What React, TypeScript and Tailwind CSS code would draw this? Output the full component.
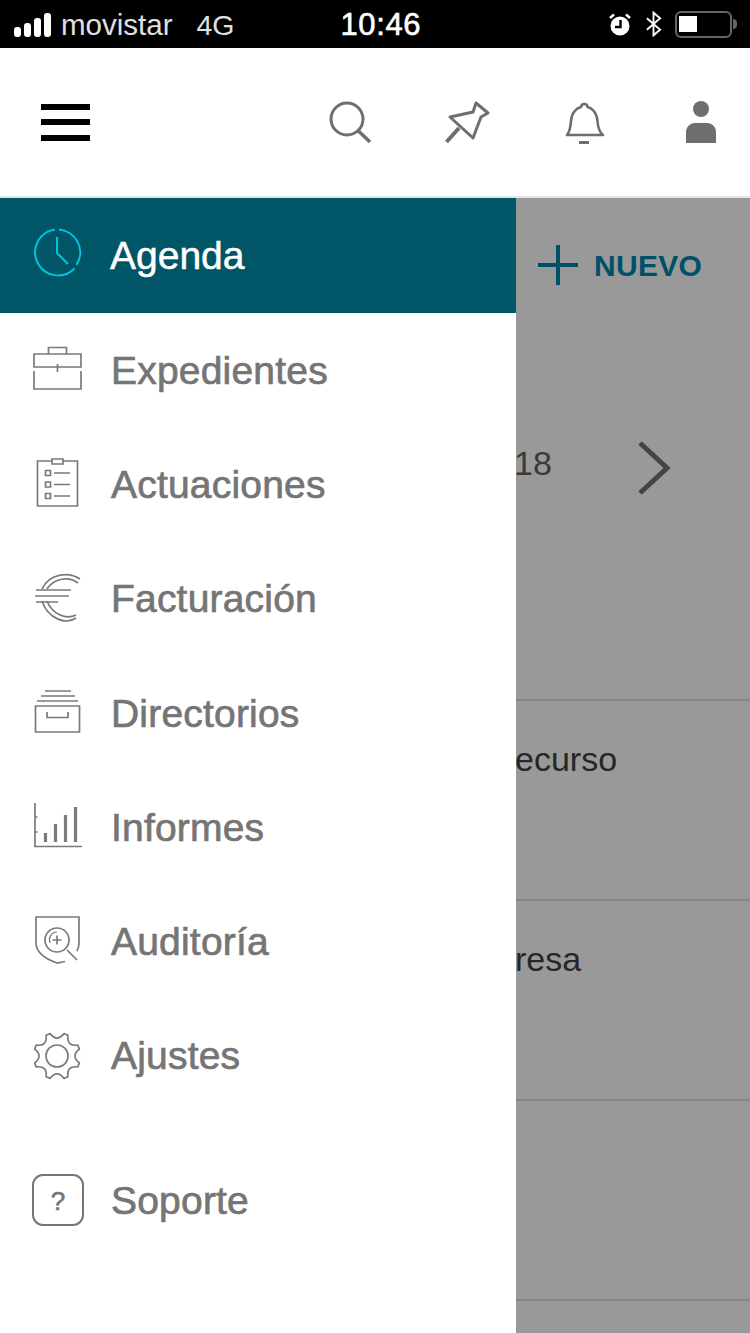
function Icon({ children }: { children: React.ReactNode }) {
  return (
    <svg width="60" height="60" viewBox="0 0 60 60" fill="none" stroke="#7a7a7a" strokeWidth="1.7" className="shrink-0">
      {children}
    </svg>
  );
}

function buildGear() {
  const p = (a: number, r: number) => `${(30 + r * Math.cos(a)).toFixed(1)} ${(30 + r * Math.sin(a)).toFixed(1)}`;
  let d = "";
  for (let i = 0; i < 8; i++) {
    const t = ((i * 45 + 22.5) * Math.PI) / 180;
    d += `${i === 0 ? "M" : "L"}${p(t - 0.09, 23.5)} L${p(t + 0.09, 23.5)} Q${p(t + Math.PI / 8, 13.5)} ${p(t + Math.PI / 4 - 0.09, 23.5)} `;
  }
  return d + "Z";
}

const items = [
  {
    label: "Expedientes",
    icon: (
      <Icon>
        <path d="M7 14h47v13H7z" />
        <path d="M7 31v18h47V31" />
        <path d="M21.500 14V7.500h18V14" />
        <path d="M30.500 24v8" />
      </Icon>
    ),
  },
  {
    label: "Actuaciones",
    icon: (
      <Icon>
        <path d="M25 7H10.500v45h40V7H36" />
        <path d="M25 5h11v5H25z" />
        <path d="M18.500 16.500h5v5h-5zM18.500 28h5v5h-5zM18.500 39.500h5v5h-5z" />
        <path d="M27 19h16M27 30.500h16M27 42h16" />
      </Icon>
    ),
  },
  {
    label: "Facturación",
    icon: (
      <Icon>
        <path d="M53 10C41 2 22 5 15 20" />
        <path d="M51 14C42 7 27 9 20 20" />
        <path d="M15 32C21 50 39 56 49 49" />
        <path d="M20 32C25 45 39 51 49 46" />
        <path d="M9 21h35M8 27h34M9 33h22" />
      </Icon>
    ),
  },
  {
    label: "Directorios",
    icon: (
      <Icon>
        <path d="M18 8h26M14 13h34M10 18h41" />
        <path d="M8.500 23h44v26h-44z" />
        <path d="M20 29v5.500h21V29" />
      </Icon>
    ),
  },
  {
    label: "Informes",
    icon: (
      <Icon>
        <path d="M8 6v43M7 49.500h48M8 20h2.500M8 35h2.500" />
        <path d="M18.500 45V36M28.500 45V27M38.500 45V18M48.500 45V10" strokeWidth="3.200" />
      </Icon>
    ),
  },
  {
    label: "Auditoría",
    icon: (
      <Icon>
        <path d="M38 50.500l-8 1.500C16 47 9 41 9 32V6h43v26c0 3-.5 5-2 8" />
        <circle cx="30" cy="29" r="12" />
        <path d="M23 32a8 8 0 0 1 7-11" strokeWidth="1.200" />
        <path d="M25.500 29h9M30 24.500v9M40 39l10 10" />
      </Icon>
    ),
  },
  {
    label: "Ajustes",
    icon: (
      <Icon>
        <path d={buildGear()} strokeLinejoin="round" />
        <circle cx="30" cy="30" r="11" />
      </Icon>
    ),
  },
];

function MenuRow({ label, icon }: { label: string; icon: React.ReactNode }) {
  return (
    <div className="flex h-[114.25px] items-center gap-[24px] pl-[27px]">
      {icon}
      <span className="pt-[2px] text-[39px] tracking-[0.2px] text-[#757575] [-webkit-text-stroke:0.7px_#757575]">{label}</span>
    </div>
  );
}

function Divider() {
  return <div className="h-[2px] bg-[#868686]" />;
}

export default function App() {
  return (
    <div className="flex h-[1333px] w-[750px] flex-col overflow-hidden bg-white font-['Liberation_Sans',sans-serif]">
      {/* status bar */}
      <div className="flex h-[48px] shrink-0 items-center bg-black pl-[14px] pr-[13px] text-white">
        <div className="flex items-end gap-[3px] pt-[2px]">
          <div className="h-[10px] w-[7px] rounded-[3px] bg-white" />
          <div className="h-[14px] w-[7px] rounded-[3px] bg-white" />
          <div className="h-[19px] w-[7px] rounded-[3px] bg-white" />
          <div className="h-[24px] w-[7px] rounded-[3px] bg-white" />
        </div>
        <span className="ml-[10px] pt-[3px] text-[29.500px] text-[#e0e0e0]">movistar</span>
        <span className="ml-[24px] pt-[3px] text-[28.500px] text-[#e0e0e0]">4G</span>
        <span className="ml-[106px] pt-[3px] text-[31px] tracking-[0.6px] [-webkit-text-stroke:0.6px_white]">10:46</span>
        <div className="ml-auto flex items-center gap-[13px]">
          <svg width="24" height="26" viewBox="0 0 24 26">
            <circle cx="12" cy="15" r="9.500" fill="white" />
            <path d="M12.500 9v7H7" stroke="black" strokeWidth="2.400" fill="none" />
            <path d="M2 7l4-3.500M22 7l-4-3.500" stroke="white" strokeWidth="2.400" />
          </svg>
          <svg width="17" height="26" viewBox="0 0 18 26" fill="none" stroke="white" strokeWidth="2">
            <path d="M2 7l14 12-7 6V1l7 6L2 19" />
          </svg>
          <div className="flex items-center">
            <div className="flex h-[27px] w-[57px] items-center rounded-[6px] border-[2.500px] border-[#666] pl-[2px]">
              <div className="h-[16px] w-[18px] bg-white" />
            </div>
            <div className="ml-[1px] h-[10px] w-[4px] rounded-r-full bg-[#666]" />
          </div>
        </div>
      </div>

      {/* top bar */}
      <div className="flex h-[148px] shrink-0 items-center pl-[41px] pr-[25px]">
        <div className="flex w-[49px] flex-col gap-[9.500px]">
          <div className="h-[6px] bg-black" />
          <div className="h-[6px] bg-black" />
          <div className="h-[6px] bg-black" />
        </div>
        <div className="ml-auto flex gap-[69px]">
          <svg width="48" height="48" viewBox="325 98 48 48" fill="none" stroke="#6e6e6e" strokeWidth="3">
            <circle cx="346" cy="119" r="16" />
            <path d="M357.500 131l11.500 11" strokeWidth="3.500" />
          </svg>
          <svg width="48" height="48" viewBox="442 98 48 48" fill="none" stroke="#6e6e6e" strokeWidth="3" strokeLinejoin="round">
            <path d="M449 117l23-5 3-9 12 10-7 4-8 21z" />
            <path d="M458 128l-12.500 14" strokeWidth="4" />
          </svg>
          <svg width="48" height="48" viewBox="559 98 48 48" fill="none" stroke="#6e6e6e" strokeWidth="2.600">
            <path d="M566 135h36c-4-3-5-7-5.500-14-.6-9-6-13-10-14-.3-4-6-4-6.500 0-4 1-9.400 5-10 14-.5 7-1.500 11-4 14z" strokeLinejoin="round" />
            <path d="M578 142.500h10" strokeWidth="3" />
          </svg>
          <svg width="48" height="48" viewBox="677 98 48 48" fill="#6e6e6e">
            <circle cx="701" cy="109" r="8" />
            <path d="M686 143v-11c0-5 4-9 9-9h12c5 0 9 4 9 9v11z" />
          </svg>
        </div>
      </div>
      <div className="h-[2px] shrink-0 bg-[#e6e6e6]" />

      <div className="flex min-h-0 flex-1">
        {/* drawer */}
        <div className="w-[516px] shrink-0 bg-white">
          <div className="flex h-[115px] items-center gap-[23px] bg-[#005566] pl-[27px]">
            <svg width="60" height="60" viewBox="0 0 60 60" fill="none" stroke="#00c4e3" strokeWidth="2" className="mt-[-3px] shrink-0">
              <path d="M32 5.600A23 23 0 0 1 49.500 41" />
              <path d="M47.500 44.500A23 23 0 1 1 28 5.600" />
              <path d="M30 13v16l11 11" />
            </svg>
            <span className="pt-[2px] text-[39px] text-white [-webkit-text-stroke:0.5px_white]">Agenda</span>
          </div>
          {items.map((item) => (
            <MenuRow key={item.label} label={item.label} icon={item.icon} />
          ))}
          <div className="mt-[30px] flex h-[114px] items-center gap-[27px] pl-[32px]">
            <div className="flex h-[52px] w-[52px] shrink-0 items-center justify-center rounded-[11px] border-2 border-[#757575] pt-[3px] text-[26px] text-[#757575] [-webkit-text-stroke:0.6px_#757575]">
              ?
            </div>
            <span className="pt-[2px] text-[39px] tracking-[0.2px] text-[#757575] [-webkit-text-stroke:0.7px_#757575]">Soporte</span>
          </div>
        </div>

        {/* page behind the drawer */}
        <div className="min-w-0 flex-1 overflow-hidden bg-[#999999]">
          <div className="flex h-[134px] items-center gap-[15px] pl-[21px]">
            <svg width="42" height="42" viewBox="0 0 42 42" stroke="#005068" strokeWidth="4">
              <path d="M21 1v40M1 21h40" />
            </svg>
            <span className="text-[30px] font-bold tracking-[0.3px] text-[#005068]">NUEVO</span>
          </div>
          <div className="flex h-[367px] items-start">
            <span className="mt-[106px] ml-[-2px] text-[34px] text-[#3a3a3a]">18</span>
            <svg width="36" height="56" viewBox="0 0 36 56" fill="none" stroke="#444" strokeWidth="5" className="mt-[108px] ml-[84px]">
              <path d="M4 3l27 25L4 53" />
            </svg>
          </div>
          <Divider />
          <div className="h-[198px] whitespace-nowrap pt-[33px] text-[34px] text-[#262626]">
            <span className="ml-[-1px]">ecurso</span>
          </div>
          <Divider />
          <div className="h-[198px] whitespace-nowrap pt-[33px] text-[34px] text-[#262626]">
            <span className="ml-[-1px]">resa</span>
          </div>
          <Divider />
          <div className="h-[198px]" />
          <Divider />
        </div>
      </div>
    </div>
  );
}
